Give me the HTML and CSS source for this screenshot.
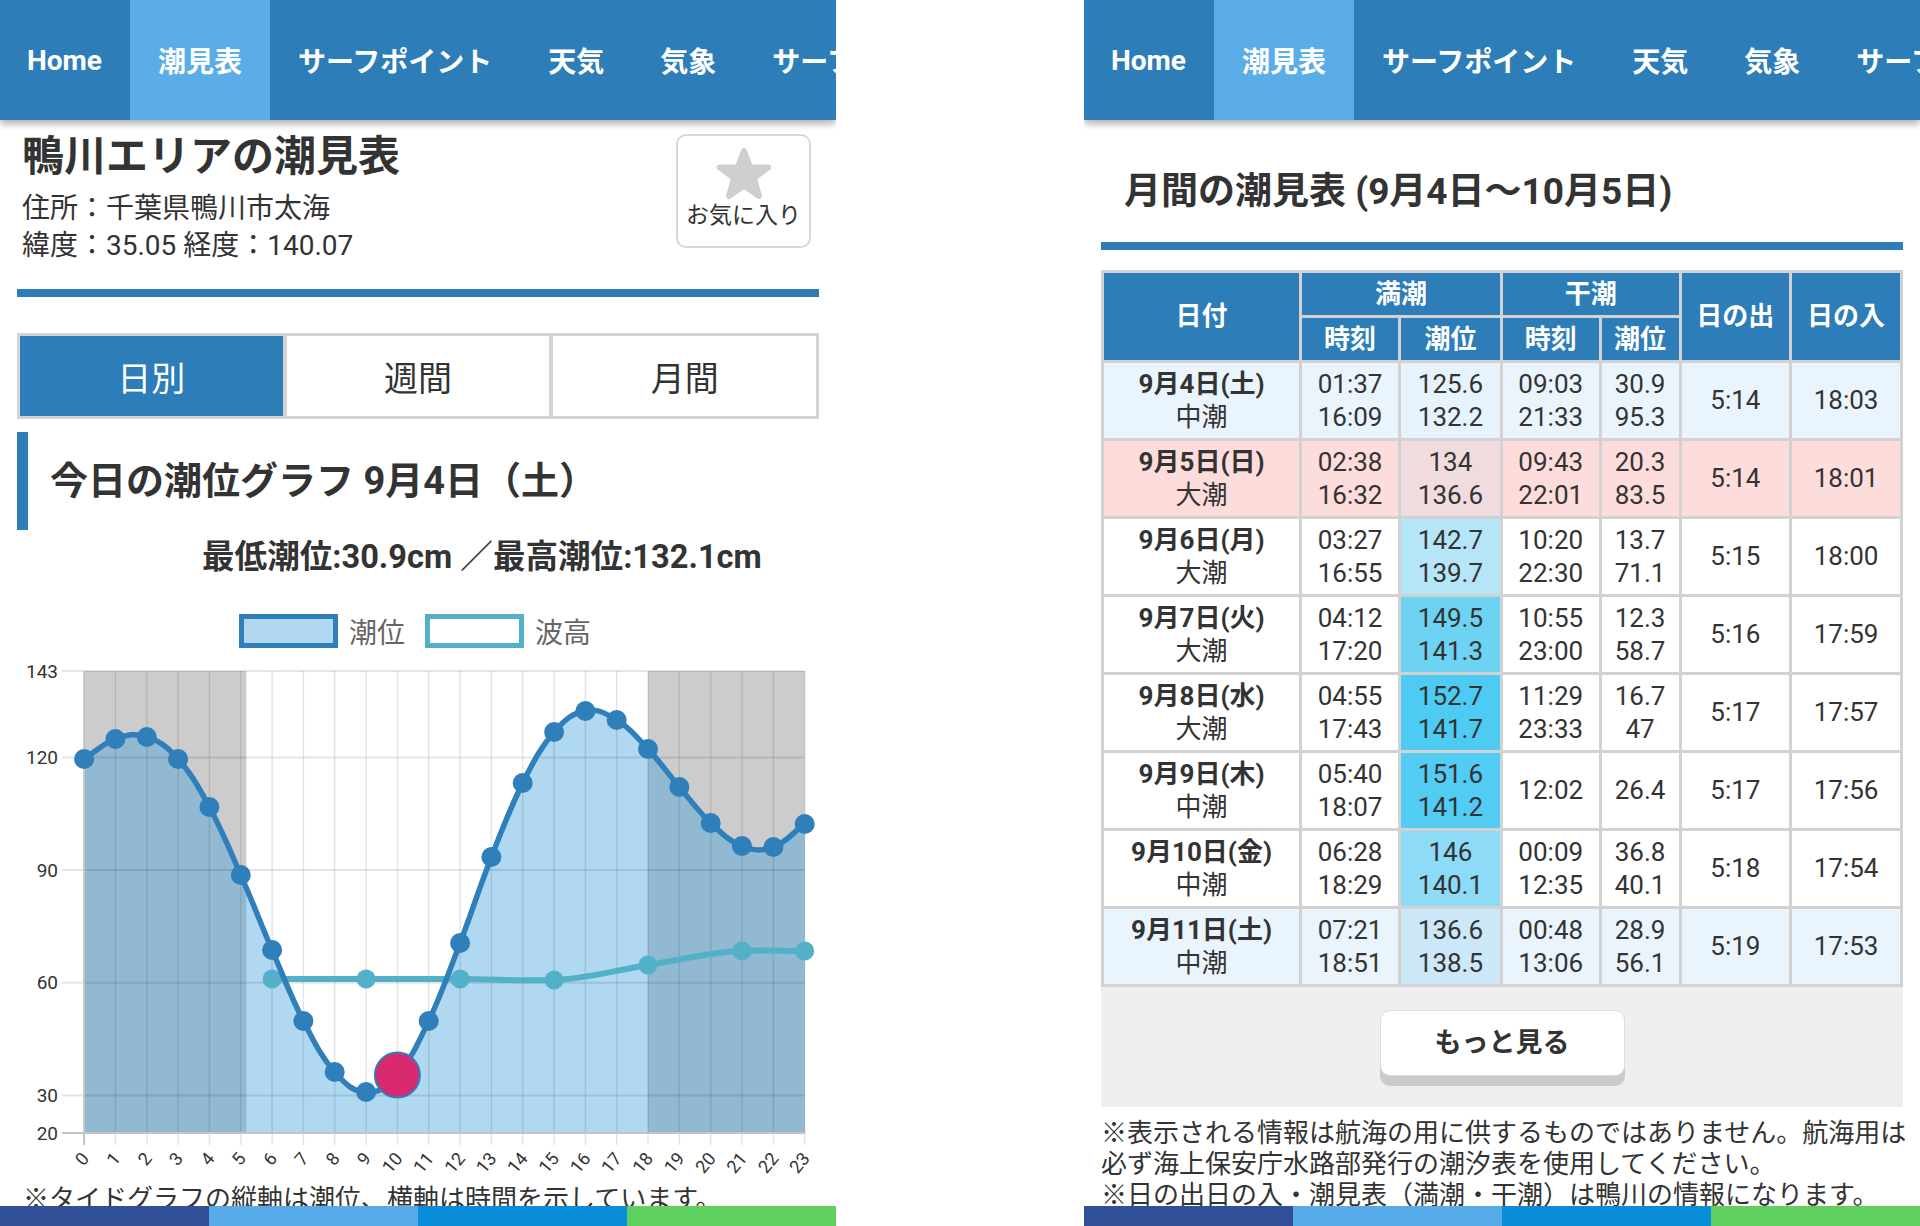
FILE: index.html
```html
<!DOCTYPE html>
<html lang="ja">
<head>
<meta charset="utf-8">
<title>鴨川エリアの潮見表</title>
<link rel="stylesheet" href="styles.css">
</head>
<body>
<div class="panel">
  <nav class="nav">
    <a href="#">Home</a>
    <a href="#" class="active">潮見表</a>
    <a href="#">サーフポイント</a>
    <a href="#">天気</a>
    <a href="#">気象</a>
    <a href="#">サーフショップ</a>
  </nav>
  <main class="content">
    <header class="spot">
      <div class="spot-info">
        <h1 class="spot-title">鴨川エリアの潮見表</h1>
        <p class="spot-line">住所：千葉県鴨川市太海</p>
        <p class="spot-line">緯度：35.05 経度：140.07</p>
      </div>
      <a href="#" class="fav">
        <svg class="fav-star" width="58" height="54" viewBox="0 0 58 54"><polygon points="29,4 35.1,20.4 53.3,20.4 38.8,31.2 44,49 29,38.6 14,49 19.2,31.2 4.7,20.4 22.9,20.4" fill="#cfcfcf" stroke="#cfcfcf" stroke-width="6" stroke-linejoin="round"/></svg>
        <span>お気に入り</span>
      </a>
    </header>
    <div class="rule"></div>
    <div class="tabs">
      <a href="#" class="tab on">日別</a>
      <a href="#" class="tab">週間</a>
      <a href="#" class="tab">月間</a>
    </div>
    <h2 class="sec">今日の潮位グラフ 9月4日（土）</h2>
    <p class="minmax">最低潮位:30.9cm ／最高潮位:132.1cm</p>
    <div class="legend">
      <div class="key"><span class="box box-tide"></span><span>潮位</span></div>
      <div class="key"><span class="box box-wave"></span><span>波高</span></div>
    </div>
    <svg class="chart" width="836" height="525" viewBox="0 660 836 525">
      <rect x="84.1" y="672" width="162.3" height="462" fill="#cccccc"/>
      <rect x="648" y="672" width="156.7" height="462" fill="#cccccc"/>
      <path d="M84.1 760 C96.6 752,102.9 744.4,115.4 740 C127.9 735.6,134.3 734,146.8 738 C159.3 742,165.6 746,178.1 760 C190.6 774,196.9 784.8,209.4 808 C221.9 831.2,228.3 847.4,240.8 876 C253.3 904.6,259.6 921.8,272.1 951 C284.6 980.2,290.9 997.6,303.4 1022 C315.9 1046.4,322.2 1058.8,334.7 1073 C347.2 1087.2,353.6 1092.4,366.1 1093 C378.6 1093.6,384.9 1090.2,397.4 1076 C409.9 1061.8,416.2 1048.4,428.7 1022 C441.2 995.6,447.6 976.8,460.1 944 C472.6 911.2,478.9 890,491.4 858 C503.9 826,510.2 809,522.7 784 C535.2 759,541.6 747.4,554.1 733 C566.6 718.6,572.9 714.4,585.4 712 C597.9 709.6,604.2 713.4,616.7 721 C629.2 728.6,635.5 736.6,648 750 C660.5 763.4,666.9 773.2,679.4 788 C691.9 802.8,698.2 812.2,710.7 824 C723.2 835.8,729.5 842.2,742 847 C754.5 851.8,760.9 852.4,773.4 848 C785.9 843.6,792.2 834.2,804.7 825 L804.7 1134 L84.1 1134 Z" fill="rgb(57,157,217)" fill-opacity="0.4"/>
      <path d="M62 672H804.7M62 758.4H804.7M62 871.1H804.7M62 983.8H804.7M62 1096.5H804.7" stroke="rgba(0,0,0,0.1)" stroke-width="2" fill="none"/>
      <path d="M115.4 672V1146M146.8 672V1146M178.1 672V1146M209.4 672V1146M240.8 672V1146M272.1 672V1146M303.4 672V1146M334.7 672V1146M366.1 672V1146M397.4 672V1146M428.7 672V1146M460.1 672V1146M491.4 672V1146M522.7 672V1146M554.1 672V1146M585.4 672V1146M616.7 672V1146M648 672V1146M679.4 672V1146M710.7 672V1146M742 672V1146M773.4 672V1146M804.7 672V1146" stroke="rgba(0,0,0,0.1)" stroke-width="1.5" fill="none"/>
      <path d="M84.1 672V1146M62 1134H804.7" stroke="#c4c4c4" stroke-width="2" fill="none"/>
      <path d="M272.1 980 C303.5 980,334.7 980,366.1 980 C397.5 980,428.7 980,460.1 980 C491.5 980,522.7 982,554.1 981 C585.5 980,616.7 971,648 966 C679.4 961,710.7 953,742 952 C763 951,783.8 952,804.7 952" stroke="#52b1c9" stroke-width="6" fill="none"/>
      <g fill="#52b1c9">
        <circle cx="272.1" cy="980" r="9.5"/><circle cx="366.1" cy="980" r="9.5"/><circle cx="460.1" cy="980" r="9.5"/><circle cx="554.1" cy="981" r="9.5"/><circle cx="648" cy="966" r="9.5"/><circle cx="742" cy="952" r="9.5"/><circle cx="804.7" cy="952" r="9.5"/>
      </g>
      <path d="M84.1 760 C96.6 752,102.9 744.4,115.4 740 C127.9 735.6,134.3 734,146.8 738 C159.3 742,165.6 746,178.1 760 C190.6 774,196.9 784.8,209.4 808 C221.9 831.2,228.3 847.4,240.8 876 C253.3 904.6,259.6 921.8,272.1 951 C284.6 980.2,290.9 997.6,303.4 1022 C315.9 1046.4,322.2 1058.8,334.7 1073 C347.2 1087.2,353.6 1092.4,366.1 1093 C378.6 1093.6,384.9 1090.2,397.4 1076 C409.9 1061.8,416.2 1048.4,428.7 1022 C441.2 995.6,447.6 976.8,460.1 944 C472.6 911.2,478.9 890,491.4 858 C503.9 826,510.2 809,522.7 784 C535.2 759,541.6 747.4,554.1 733 C566.6 718.6,572.9 714.4,585.4 712 C597.9 709.6,604.2 713.4,616.7 721 C629.2 728.6,635.5 736.6,648 750 C660.5 763.4,666.9 773.2,679.4 788 C691.9 802.8,698.2 812.2,710.7 824 C723.2 835.8,729.5 842.2,742 847 C754.5 851.8,760.9 852.4,773.4 848 C785.9 843.6,792.2 834.2,804.7 825" stroke="#2e7fba" stroke-width="5.5" fill="none"/>
      <g fill="#2e7fba">
        <circle cx="84.1" cy="760" r="10"/><circle cx="115.4" cy="740" r="10"/><circle cx="146.8" cy="738" r="10"/><circle cx="178.1" cy="760" r="10"/><circle cx="209.4" cy="808" r="10"/><circle cx="240.8" cy="876" r="10"/><circle cx="272.1" cy="951" r="10"/><circle cx="303.4" cy="1022" r="10"/><circle cx="334.7" cy="1073" r="10"/><circle cx="366.1" cy="1093" r="10"/><circle cx="428.7" cy="1022" r="10"/><circle cx="460.1" cy="944" r="10"/><circle cx="491.4" cy="858" r="10"/><circle cx="522.7" cy="784" r="10"/><circle cx="554.1" cy="733" r="10"/><circle cx="585.4" cy="712" r="10"/><circle cx="616.7" cy="721" r="10"/><circle cx="648" cy="750" r="10"/><circle cx="679.4" cy="788" r="10"/><circle cx="710.7" cy="824" r="10"/><circle cx="742" cy="847" r="10"/><circle cx="773.4" cy="848" r="10"/><circle cx="804.7" cy="825" r="10"/>
      </g>
      <circle cx="397.4" cy="1076" r="22.5" fill="#d9296f" stroke="#2e7fba" stroke-width="2"/>
      <g class="ylab" text-anchor="end">
        <text x="58" y="678.5">143</text><text x="58" y="765">120</text><text x="58" y="877.5">90</text><text x="58" y="990">60</text><text x="58" y="1103">30</text><text x="58" y="1140.5">20</text>
      </g>
      <g class="xlab" text-anchor="end">
        <text x="90.1" y="1160" transform="rotate(-50 90.1 1160)">0</text>
        <text x="121.4" y="1160" transform="rotate(-50 121.4 1160)">1</text>
        <text x="152.8" y="1160" transform="rotate(-50 152.8 1160)">2</text>
        <text x="184.1" y="1160" transform="rotate(-50 184.1 1160)">3</text>
        <text x="215.4" y="1160" transform="rotate(-50 215.4 1160)">4</text>
        <text x="246.8" y="1160" transform="rotate(-50 246.8 1160)">5</text>
        <text x="278.1" y="1160" transform="rotate(-50 278.1 1160)">6</text>
        <text x="309.4" y="1160" transform="rotate(-50 309.4 1160)">7</text>
        <text x="340.7" y="1160" transform="rotate(-50 340.7 1160)">8</text>
        <text x="372.1" y="1160" transform="rotate(-50 372.1 1160)">9</text>
        <text x="403.4" y="1160" transform="rotate(-50 403.4 1160)">10</text>
        <text x="434.7" y="1160" transform="rotate(-50 434.7 1160)">11</text>
        <text x="466.1" y="1160" transform="rotate(-50 466.1 1160)">12</text>
        <text x="497.4" y="1160" transform="rotate(-50 497.4 1160)">13</text>
        <text x="528.7" y="1160" transform="rotate(-50 528.7 1160)">14</text>
        <text x="560.1" y="1160" transform="rotate(-50 560.1 1160)">15</text>
        <text x="591.4" y="1160" transform="rotate(-50 591.4 1160)">16</text>
        <text x="622.7" y="1160" transform="rotate(-50 622.7 1160)">17</text>
        <text x="654" y="1160" transform="rotate(-50 654 1160)">18</text>
        <text x="685.4" y="1160" transform="rotate(-50 685.4 1160)">19</text>
        <text x="716.7" y="1160" transform="rotate(-50 716.7 1160)">20</text>
        <text x="748" y="1160" transform="rotate(-50 748 1160)">21</text>
        <text x="779.4" y="1160" transform="rotate(-50 779.4 1160)">22</text>
        <text x="810.7" y="1160" transform="rotate(-50 810.7 1160)">23</text>
      </g>
    </svg>
    <p class="note">※タイドグラフの縦軸は潮位、横軸は時間を示しています。</p>
  </main>
  <div class="colorbar"><span class="c1"></span><span class="c2"></span><span class="c3"></span><span class="c4"></span></div>
</div>

<div class="panel">
  <nav class="nav">
    <a href="#">Home</a>
    <a href="#" class="active">潮見表</a>
    <a href="#">サーフポイント</a>
    <a href="#">天気</a>
    <a href="#">気象</a>
    <a href="#">サーフショップ</a>
  </nav>
  <main class="content">
    <h2 class="mtitle">月間の潮見表 (9月4日～10月5日)</h2>
    <div class="rule rule-m"></div>
    <table class="tide">
      <colgroup><col class="w-date"><col class="w-t"><col class="w-h"><col class="w-t"><col class="w-l"><col class="w-s"><col class="w-s2"></colgroup>
      <thead>
        <tr class="hr"><th rowspan="2">日付</th><th colspan="2">満潮</th><th colspan="2">干潮</th><th rowspan="2">日の出</th><th rowspan="2">日の入</th></tr>
        <tr class="hr"><th>時刻</th><th>潮位</th><th>時刻</th><th>潮位</th></tr>
      </thead>
      <tbody>
        <tr class="sat"><td><b>9月4日(土)</b><br>中潮</td><td>01:37<br>16:09</td><td style="background:#e6f2fc">125.6<br>132.2</td><td>09:03<br>21:33</td><td>30.9<br>95.3</td><td>5:14</td><td>18:03</td></tr>
        <tr class="sun"><td><b>9月5日(日)</b><br>大潮</td><td>02:38<br>16:32</td><td style="background:#f0dcdf">134<br>136.6</td><td>09:43<br>22:01</td><td>20.3<br>83.5</td><td>5:14</td><td>18:01</td></tr>
        <tr><td><b>9月6日(月)</b><br>大潮</td><td>03:27<br>16:55</td><td style="background:#b5e6f8">142.7<br>139.7</td><td>10:20<br>22:30</td><td>13.7<br>71.1</td><td>5:15</td><td>18:00</td></tr>
        <tr><td><b>9月7日(火)</b><br>大潮</td><td>04:12<br>17:20</td><td style="background:#6ed3f2">149.5<br>141.3</td><td>10:55<br>23:00</td><td>12.3<br>58.7</td><td>5:16</td><td>17:59</td></tr>
        <tr><td><b>9月8日(水)</b><br>大潮</td><td>04:55<br>17:43</td><td style="background:#4ecbf3">152.7<br>141.7</td><td>11:29<br>23:33</td><td>16.7<br>47</td><td>5:17</td><td>17:57</td></tr>
        <tr><td><b>9月9日(木)</b><br>中潮</td><td>05:40<br>18:07</td><td style="background:#52ccf3">151.6<br>141.2</td><td>12:02</td><td>26.4</td><td>5:17</td><td>17:56</td></tr>
        <tr><td><b>9月10日(金)</b><br>中潮</td><td>06:28<br>18:29</td><td style="background:#8ddbf6">146<br>140.1</td><td>00:09<br>12:35</td><td>36.8<br>40.1</td><td>5:18</td><td>17:54</td></tr>
        <tr class="sat"><td><b>9月11日(土)</b><br>中潮</td><td>07:21<br>18:51</td><td style="background:#cce8f8">136.6<br>138.5</td><td>00:48<br>13:06</td><td>28.9<br>56.1</td><td>5:19</td><td>17:53</td></tr>
      </tbody>
    </table>
    <div class="more"><a href="#" class="more-btn">もっと見る</a></div>
    <p class="notes">※表示される情報は航海の用に供するものではありません。航海用は<br>必ず海上保安庁水路部発行の潮汐表を使用してください。<br>※日の出日の入・潮見表（満潮・干潮）は鴨川の情報になります。</p>
  </main>
  <div class="colorbar"><span class="c1"></span><span class="c2"></span><span class="c3"></span><span class="c4"></span></div>
</div>
</body>
</html>
```

FILE: styles.css
```css
* { box-sizing: border-box; }
html, body { margin: 0; padding: 0; }
body {
  width: 1920px;
  height: 1226px;
  overflow: hidden;
  display: flex;
  justify-content: space-between;
  background: #fff;
  color: #333;
  font-family: Roboto, "Noto Sans CJK JP", sans-serif;
}
a { text-decoration: none; color: inherit; }

.panel {
  width: 836px;
  height: 1226px;
  display: flex;
  flex-direction: column;
  overflow: hidden;
}

.nav {
  flex: none;
  height: 120px;
  display: flex;
  background: #2d7db8;
  box-shadow: 0 4px 7px rgba(0, 0, 0, 0.3);
  position: relative;
  z-index: 1;
  white-space: nowrap;
}
.nav a {
  flex: none;
  display: flex;
  align-items: center;
  padding: 0 28px;
  color: #fff;
  font-size: 28px;
  font-weight: 700;
}
.nav a:first-child { padding-left: 27px; }
.nav a.active { background: #5aade6; }

.content {
  flex: 1;
  min-height: 0;
  overflow: hidden;
  padding: 0 17px;
}

.colorbar { flex: none; height: 20px; display: flex; }
.colorbar span { flex: 1; }
.c1 { background: #304f96; }
.c2 { background: #58abea; }
.c3 { background: #0a8eda; }
.c4 { background: #5fcf60; }

/* spot header */
.spot {
  display: flex;
  justify-content: space-between;
  align-items: flex-start;
  padding: 14px 8px 0 5px;
}
.spot-title {
  margin: 0 0 10px;
  font-size: 42px;
  line-height: 46px;
  font-weight: 700;
}
.spot-line {
  margin: 0;
  font-size: 28px;
  line-height: 37px;
}
.fav {
  width: 135px;
  height: 114px;
  border: 2px solid #d8d8d8;
  border-radius: 10px;
  display: flex;
  flex-direction: column;
  align-items: center;
  padding-top: 11px;
  font-size: 23px;
  line-height: 30px;
  color: #333;
}
.fav-star { display: block; }

.rule { height: 8px; background: #2d7db8; margin-top: 25px; }

.tabs {
  margin-top: 36px;
  display: flex;
  gap: 4px;
  border: 3px solid #d4d4d4;
  background: #d4d4d4;
}
.tab {
  flex: 1;
  height: 80px;
  background: #fff;
  display: flex;
  align-items: center;
  justify-content: center;
  font-size: 34px;
  color: #333;
}
.tab.on { background: #2d7db8; color: #fff; }

.sec {
  margin: 13px 0 0;
  height: 98px;
  border-left: 11px solid #2d7db8;
  padding: 0 0 8px 22px;
  display: flex;
  align-items: center;
  font-size: 38px;
  font-weight: 700;
}

.minmax {
  margin: 7px 0 0;
  padding-left: 185px;
  font-size: 32.6px;
  line-height: 40px;
  font-weight: 700;
}

.legend {
  margin-top: 37px;
  height: 34px;
  display: flex;
  justify-content: center;
  align-items: center;
  gap: 20px;
  padding-right: 6px;
  font-size: 28px;
  color: #666;
}
.key { display: flex; align-items: center; gap: 11px; }
.box { display: block; width: 99px; height: 34px; border: 5px solid; }
.box-tide { background: #b2d8f0; border-color: #2e7fba; }
.box-wave { background: #fff; border-color: #52b1c9; }

.chart { display: block; margin: 11px 0 0 -17px; }
.ylab, .xlab { font-family: Roboto, sans-serif; fill: #333; }
.ylab { font-size: 19px; }
.xlab { font-size: 18px; }

.note {
  margin: 0;
  padding-left: 6px;
  font-size: 26px;
  line-height: 30px;
  white-space: nowrap;
}

/* monthly */
.mtitle {
  margin: 50px 0 0;
  padding-left: 23px;
  font-size: 37px;
  line-height: 44px;
  font-weight: 700;
}
.rule-m { margin-top: 28px; }

.tide {
  width: 100%;
  margin-top: 20px;
  border-collapse: collapse;
  text-align: center;
  font-size: 26px;
  line-height: 33px;
}
.w-date { width: 199px; }
.w-t { width: 99px; }
.w-h { width: 102px; }
.w-l { width: 80px; }
.w-s { width: 111px; }
.w-s2 { width: 111px; }
.tide th, .tide td { border: 3px solid #d2d2d2; padding: 0; }
.tide th { background: #2d7db8; color: #fff; font-weight: 700; }
.tide tr.hr { height: 45px; }
.tide tbody tr { height: 78px; }
.tide td b { font-weight: 700; }
.tide tr.sat td { background: #eaf4fd; }
.tide tr.sun td { background: #fddcdc; }

.more {
  height: 120px;
  background: #efefef;
  display: flex;
  justify-content: center;
  padding-top: 23px;
}
.more-btn {
  width: 245px;
  height: 66px;
  background: #fff;
  border: 1px solid #dcdcdc;
  border-radius: 10px;
  box-shadow: 0 10px 0 #cacaca;
  display: flex;
  align-items: center;
  justify-content: center;
  font-size: 27px;
  font-weight: 700;
  color: #333;
  padding-bottom: 6px;
}

.notes {
  margin: 11px 0 0;
  font-size: 26px;
  line-height: 31px;
  white-space: nowrap;
}
```
